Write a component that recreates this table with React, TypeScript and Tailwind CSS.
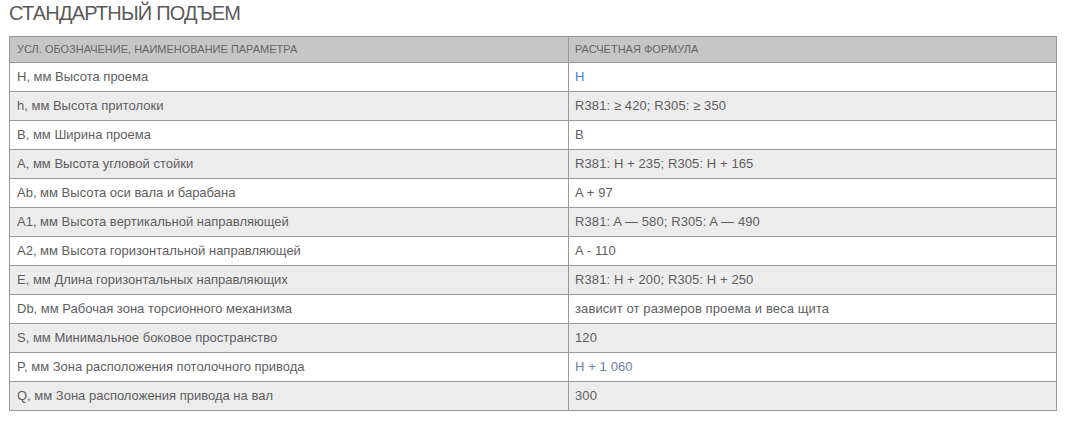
const rows: { name: string; formula: string; tone?: string }[] = [
  { name: "H, мм Высота проема", formula: "H", tone: "text-[#4a80c4]" },
  { name: "h, мм Высота притолоки", formula: "R381: ≥ 420; R305: ≥ 350" },
  { name: "B, мм Ширина проема", formula: "B" },
  { name: "A, мм Высота угловой стойки", formula: "R381: H + 235; R305: H + 165" },
  { name: "Ab, мм Высота оси вала и барабана", formula: "A + 97" },
  { name: "A1, мм Высота вертикальной направляющей", formula: "R381: A — 580; R305: A — 490" },
  { name: "A2, мм Высота горизонтальной направляющей", formula: "A - 110" },
  { name: "E, мм Длина горизонтальных направляющих", formula: "R381: H + 200; R305: H + 250" },
  { name: "Db, мм Рабочая зона торсионного механизма", formula: "зависит от размеров проема и веса щита" },
  { name: "S, мм Минимальное боковое пространство", formula: "120" },
  { name: "P, мм Зона расположения потолочного привода", formula: "H + 1 060", tone: "text-[#6a7fa6]" },
  { name: "Q, мм Зона расположения привода на вал", formula: "300" },
];

const App = () => {
  return (
    <div className="w-[1072px] h-[427px] bg-white font-['Liberation_Sans',Arial,sans-serif] text-[#5e5e5e]">
      <div className="pl-[9px] pr-[15px] pt-[2px]">
        <h2 className="text-[20px] leading-[22px] font-light text-[#5a5a5a] tracking-[-0.8px]">
          СТАНДАРТНЫЙ ПОДЪЕМ
        </h2>

        <table className="mt-[12px] w-[1048px] border-collapse border border-[#999] table-fixed">
          <thead>
            <tr className="bg-[#c6c6c6] h-[26px]">
              <th className="w-[559px] border border-[#999] px-[7px] text-left text-[11px] font-normal text-[#666] uppercase">
                Усл. обозначение, наименование параметра
              </th>
              <th className="border border-[#999] px-[6px] text-left text-[11px] font-normal text-[#666] uppercase">
                Расчетная формула
              </th>
            </tr>
          </thead>
          <tbody>
            {rows.map((row, index) => (
              <tr
                key={index}
                className={`h-[29px] ${index % 2 === 0 ? "bg-white" : "bg-[#ececec]"}`}
              >
                <td className="border border-[#999] px-[7px] text-[13px] text-[#5e5e5e]">
                  {row.name}
                </td>
                <td className={`border border-[#999] px-[6px] text-[13px] tracking-[0.1px] ${row.tone ?? "text-[#5e5e5e]"}`}>
                  {row.formula}
                </td>
              </tr>
            ))}
          </tbody>
        </table>
      </div>
    </div>
  );
};

export default App;
